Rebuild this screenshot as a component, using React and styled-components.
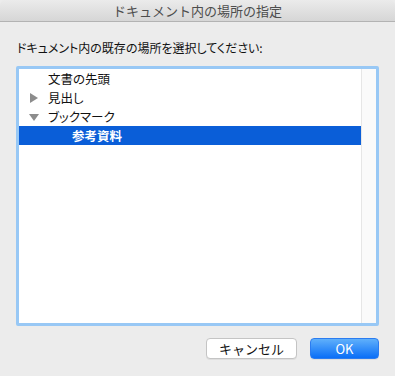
import React from 'react';
import styled, { createGlobalStyle } from 'styled-components';

const GlobalStyle = createGlobalStyle`
    html, body {
        margin: 0;
        padding: 0;
        background: #ececec;
    }
    body {
        font-family: "Noto Sans CJK JP", "Liberation Sans", sans-serif;
    }
`;

const Window = styled.div`
    width: 395px;
    height: 376px;
    background: #ececec;
    display: flex;
    flex-direction: column;
    overflow: hidden;
`;

const TitleBar = styled.div`
    height: 22px;
    box-sizing: border-box;
    border-bottom: 1px solid #b3b3b3;
    border-radius: 5px 5px 0 0;
    background: linear-gradient(#ebebeb, #d6d6d6);
    display: flex;
    align-items: center;
    justify-content: center;
    font-size: 13px;
    color: #4d4d4d;
`;

const Content = styled.div`
    flex: 1;
    display: flex;
    flex-direction: column;
    padding: 17px 16px 0 16px;
`;

const Prompt = styled.div`
    font-size: 12px;
    line-height: 18px;
    color: #111;
    padding-left: 1px;
    font-feature-settings: "palt";
`;

const ListFrame = styled.div`
    margin-top: 9px;
    height: 260px;
    box-sizing: border-box;
    border: 3px solid #98c8f5;
    border-radius: 2px;
    background: #fff;
    display: flex;
`;

const Rows = styled.div`
    flex: 1;
    display: flex;
    flex-direction: column;
`;

const Row = styled.div`
    height: 19px;
    display: flex;
    align-items: center;
    font-size: 12.5px;
    font-feature-settings: "palt";
    color: ${p => (p.$selected ? '#fff' : '#111')};
    background: ${p => (p.$selected ? '#0a5ed8' : 'transparent')};
    font-weight: ${p => (p.$selected ? 700 : 400)};
    padding-left: ${p => 10 + p.$level * 24}px;
`;

const Disclosure = styled.span`
    width: 19px;
    display: inline-flex;
    align-items: center;
`;

const Label = styled.span`
    margin-left: ${p => (p.$noArrow ? 19 : 0)}px;
`;

const ScrollTrack = styled.div`
    width: 14px;
    border-left: 1px solid #e6e6e6;
    background: #fafafa;
`;

const ButtonRow = styled.div`
    margin-top: 12px;
    display: flex;
    justify-content: flex-end;
    gap: 13px;
`;

const Button = styled.button`
    height: 21px;
    box-sizing: border-box;
    border-radius: 4px;
    font-family: inherit;
    font-size: 13px;
    padding: 0;
    display: flex;
    align-items: center;
    justify-content: center;
    width: ${p => (p.$primary ? 69 : 91)}px;
    color: ${p => (p.$primary ? '#fff' : '#111')};
    border: 1px solid ${p => (p.$primary ? '#2b7cf0' : '#c4c4c4')};
    background: ${p => (p.$primary ? 'linear-gradient(#5fb0fb, #0a6ef7)' : '#fff')};
    box-shadow: 0 1px 0 rgba(0, 0, 0, 0.06);
`;

const Arrow = ({ open }) => (
    <svg width="10" height="10" viewBox="0 0 10 10">
        {open
            ? <polygon points="0,2 10,2 5,9" fill="#8c8c8c" />
            : <polygon points="1,0 9,5 1,10" fill="#8c8c8c" />}
    </svg>
);

const items = [
    { label: '文書の先頭', level: 0 },
    { label: '見出し', level: 0, arrow: 'closed' },
    { label: 'ブックマーク', level: 0, arrow: 'open' },
    { label: '参考資料', level: 1, selected: true },
];

const App = () => (
    <Window>
        <GlobalStyle />
        <TitleBar>ドキュメント内の場所の指定</TitleBar>
        <Content>
            <Prompt>ドキュメント内の既存の場所を選択してください:</Prompt>
            <ListFrame>
                <Rows>
                    {items.map(item => (
                        <Row key={item.label} $level={item.level} $selected={item.selected}>
                            {item.arrow && (
                                <Disclosure><Arrow open={item.arrow === 'open'} /></Disclosure>
                            )}
                            <Label $noArrow={!item.arrow}>{item.label}</Label>
                        </Row>
                    ))}
                </Rows>
                <ScrollTrack />
            </ListFrame>
            <ButtonRow>
                <Button>キャンセル</Button>
                <Button $primary>OK</Button>
            </ButtonRow>
        </Content>
    </Window>
);

export default App;
